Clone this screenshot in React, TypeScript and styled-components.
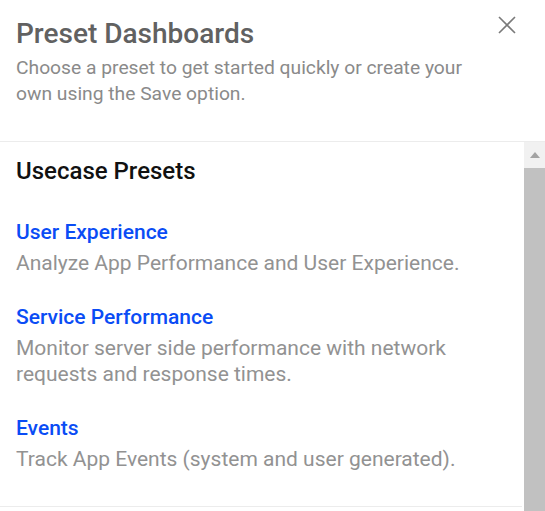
import * as React from 'react';
import styled, { createGlobalStyle } from 'styled-components';

const GlobalStyle = createGlobalStyle`
    html, body {
        margin: 0;
        padding: 0;
        background: #ffffff;
        font-family: Roboto, "Noto Sans", Arial, sans-serif;
    }
`;

type Preset = {
    title: string;
    description: string;
};

const presets: Preset[] = [
    { title: 'User Experience', description: 'Analyze App Performance and User Experience.' },
    { title: 'Service Performance', description: 'Monitor server side performance with network requests and response times.' },
    { title: 'Events', description: 'Track App Events (system and user generated).' },
];

const App = () => {
    return (
        <>
            <GlobalStyle />
            <Panel>
                <Header>
                    <HeaderText>
                        <Title>Preset Dashboards</Title>
                        <Subtitle>Choose a preset to get started quickly or create your own using the Save option.</Subtitle>
                    </HeaderText>
                    <CloseButton aria-label="Close">
                        <svg width="18" height="18" viewBox="0 0 18 18">
                            <path d="M1 1 L17 17 M17 1 L1 17" stroke="#7a7a7a" strokeWidth="1.6" fill="none" />
                        </svg>
                    </CloseButton>
                </Header>
                <Body>
                    <List>
                        <SectionTitle>Usecase Presets</SectionTitle>
                        {presets.map(p => (
                            <Item key={p.title}>
                                <ItemTitle href="#">{p.title}</ItemTitle>
                                <ItemDesc>{p.description}</ItemDesc>
                            </Item>
                        ))}
                        <Footer />
                    </List>
                    <Scrollbar>
                        <ScrollArrow>
                            <svg width="10" height="6" viewBox="0 0 10 6">
                                <path d="M5 0 L10 6 L0 6 Z" fill="#a3a3a3" />
                            </svg>
                        </ScrollArrow>
                        <Thumb />
                    </Scrollbar>
                </Body>
            </Panel>
        </>
    );
};

export default App;

const Panel = styled.div`
    width: 545px;
    height: 511px;
    overflow: hidden;
    display: flex;
    flex-direction: column;
    background: #fff;
`

const Header = styled.div`
    display: flex;
    justify-content: space-between;
    align-items: flex-start;
    padding: 18px 16px 34px 16px;
    border-bottom: 1px solid #ececec;
`

const HeaderText = styled.div`
    display: flex;
    flex-direction: column;
    gap: 5px;
    max-width: 470px;
`

const Title = styled.h1`
    margin: 0;
    font-size: 28px;
    line-height: 32px;
    font-weight: 500;
    color: #616161;
`

const Subtitle = styled.p`
    margin: 0;
    font-size: 19.25px;
    line-height: 26px;
    color: #8a8a8a;
`

const CloseButton = styled.button`
    border: none;
    background: none;
    padding: 0;
    margin: -2px 13px 0 0;
    cursor: pointer;
    display: flex;
`

const Body = styled.div`
    flex: 1;
    display: flex;
    min-height: 0;
`

const List = styled.div`
    flex: 1;
    padding: 14px 0 0 0;
    display: flex;
    flex-direction: column;
`

const SectionTitle = styled.h2`
    margin: 0 16px 31px 16px;
    font-size: 24px;
    line-height: 30px;
    font-weight: 500;
    color: #111;
`

const Item = styled.div`
    display: flex;
    flex-direction: column;
    gap: 3px;
    padding: 0 60px 26px 16px;
`

const ItemTitle = styled.a`
    font-size: 21px;
    line-height: 30px;
    font-weight: 500;
    color: #0a4cf5;
    text-decoration: none;
`

const ItemDesc = styled.div`
    font-size: 21px;
    line-height: 26px;
    color: #929292;
`

const Footer = styled.div`
    margin-top: 8px;
    border-top: 1px solid #ececec;
`

const Scrollbar = styled.div`
    width: 21px;
    margin-left: 2px;
    display: flex;
    flex-direction: column;
    background: #f1f1f1;
`

const ScrollArrow = styled.div`
    height: 26px;
    display: flex;
    align-items: center;
    justify-content: center;
`

const Thumb = styled.div`
    flex: 1;
    background: #c1c1c1;
`
